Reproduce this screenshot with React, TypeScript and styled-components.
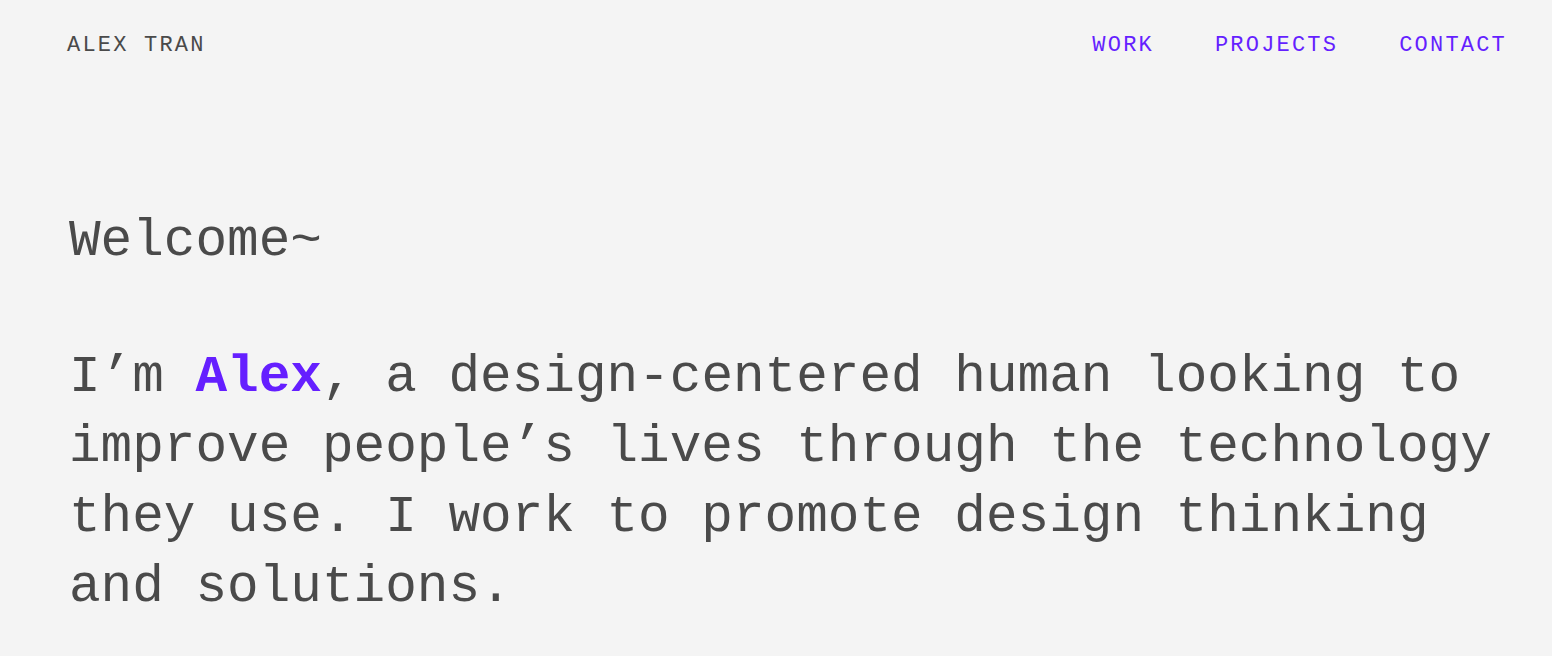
import React from 'react';
import styled, { createGlobalStyle } from 'styled-components';

const GlobalStyle = createGlobalStyle`
  html, body {
    margin: 0;
    padding: 0;
    background: #f4f4f4;
  }
  body {
    font-family: 'Liberation Mono', 'DejaVu Sans Mono', monospace;
    color: #4a4a4a;
  }
`;

const Page = styled.div`
  min-height: 656px;
  padding: 0 45px 0 67px;
  background: #f4f4f4;
`;

// 상단 헤더
const Header = styled.header`
  display: flex;
  justify-content: space-between;
  align-items: center;
  padding-top: 33px;
`;

const Brand = styled.a`
  font-size: 22px;
  letter-spacing: 2.2px;
  color: #4a4a4a;
  text-decoration: none;
  text-transform: uppercase;
`;

const Nav = styled.nav`
  display: flex;
  gap: 61px;
`;

const NavLink = styled.a`
  font-size: 22px;
  letter-spacing: 2.2px;
  color: #651fff;
  text-decoration: none;
  text-transform: uppercase;
`;

// 소개 섹션
const Intro = styled.main`
  margin-top: 148px;
  padding-left: 2px;
`;

const Greeting = styled.h1`
  margin: 0;
  font-size: 52.7px;
  font-weight: 400;
  line-height: 70px;
`;

const Bio = styled.p`
  margin: 66px 0 0;
  font-size: 52.7px;
  line-height: 70px;
`;

const Highlight = styled.strong`
  color: #651fff;
  font-weight: 700;
`;

export default function App() {
  return (
    <>
      <GlobalStyle />
      <Page>
        <Header>
          <Brand href="#">Alex Tran</Brand>
          <Nav>
            <NavLink href="#">Work</NavLink>
            <NavLink href="#">Projects</NavLink>
            <NavLink href="#">Contact</NavLink>
          </Nav>
        </Header>
        <Intro>
          <Greeting>Welcome~</Greeting>
          <Bio>
            I’m <Highlight>Alex</Highlight>, a design-centered human looking to improve
            people’s lives through the technology they use. I work to promote design
            thinking and solutions.
          </Bio>
        </Intro>
      </Page>
    </>
  );
}
